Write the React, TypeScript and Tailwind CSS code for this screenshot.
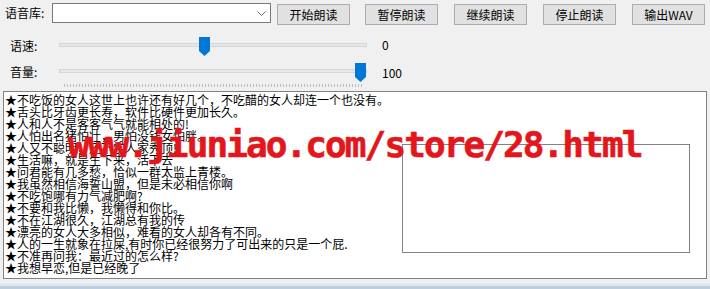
import React from "react";

const lines = [
  "★不吃饭的女人这世上也许还有好几个，不吃醋的女人却连一个也没有。",
  "★舌头比牙齿更长寿，软件比硬件更加长久。",
  "★人和人不是客客气气就能相处的!",
  "★人怕出名猪怕壮，男怕没钱女怕胖。",
  "★人又不聪明，还不学人家秀顶!",
  "★生活嘛，就是生下来，活下去",
  "★问君能有几多愁，恰似一群太监上青楼。",
  "★我虽然相信海誓山盟，但是未必相信你啊",
  "★不吃饱哪有力气减肥啊?",
  "★不要和我比懒，我懒得和你比。",
  "★不在江湖很久，江湖总有我的传",
  "★漂亮的女人大多相似，难看的女人却各有不同。",
  "★人的一生就象在拉屎,有时你已经很努力了可出来的只是一个屁.",
  "★不准再问我：最近过的怎么样?",
  "★我想早恋,但是已经晚了",
];

const buttons = [
  { label: "开始朗读", gap: "ml-[6px]" },
  { label: "暂停朗读", gap: "ml-[15px]" },
  { label: "继续朗读", gap: "ml-[16px]" },
  { label: "停止朗读", gap: "ml-[16px]" },
  { label: "输出WAV", gap: "ml-[16px]" },
];

function Slider({ thumbLeft, ticks }: { thumbLeft: number; ticks?: boolean }) {
  return (
    <div className="relative w-[308px] h-full">
      <div className="absolute left-0 right-0 top-[8px] h-[4px] bg-[#e7e7e7] border border-[#d6d6d6]" />
      <svg
        className="absolute top-[2px]"
        style={{ left: thumbLeft }}
        width="11"
        height="19"
        viewBox="0 0 11 19"
      >
        <path d="M0 0H11V14L5.5 19L0 14Z" fill="#0078d7" />
      </svg>
      {ticks && (
        <div className="absolute left-[5px] w-[298px] top-[23px] h-[3px] bg-[image:repeating-linear-gradient(to_right,#bdbdbd_0px,#bdbdbd_1px,transparent_1px,transparent_3px)]" />
      )}
    </div>
  );
}

export default function App() {
  return (
    <div className="relative w-[710px] h-[289px] overflow-hidden bg-[#f0f0f0] text-[12px] text-black font-['Noto_Sans_CJK_SC',sans-serif]">
      {/* 顶部工具行 */}
      <div className="flex items-start pt-[3px] pl-[5px] h-[25px]">
        <div className="w-[47px] h-[20px] leading-[20px]">语音库:</div>
        <div className="relative w-[219px] h-[20px] bg-white border border-[#7a7a7a]">
          <svg className="absolute right-[4px] top-[7px]" width="9" height="5" viewBox="0 0 9 5">
            <path d="M0.5 0.5L4.5 4.5L8.5 0.5" fill="none" stroke="#707070" strokeWidth="1" />
          </svg>
        </div>
        {buttons.map((b) => (
          <div
            key={b.label}
            className={`${b.gap} mt-[1px] w-[73px] h-[21px] flex items-center justify-center bg-[#e1e1e1] border border-[#adadad]`}
          >
            {b.label}
          </div>
        ))}
      </div>

      {/* 语速 */}
      <div className="flex mt-[10px] h-[26px]">
        <div className="w-[59px] pl-[10px] pt-[5px] leading-[12px]">语速:</div>
        <Slider thumbLeft={140} />
        <div className="ml-[15px] pt-[4px] leading-[12px]">0</div>
      </div>

      {/* 音量 */}
      <div className="flex h-[30px]">
        <div className="w-[59px] pl-[10px] pt-[5px] leading-[12px]">音量:</div>
        <Slider thumbLeft={296} ticks />
        <div className="ml-[15px] pt-[6px] leading-[12px]">100</div>
      </div>

      {/* 文本区 */}
      <div className="relative mx-[3px] h-[188px] bg-white border border-[#828282] pl-[1px] pt-[2px] leading-[12px] whitespace-nowrap overflow-hidden">
        {lines.map((l, i) => (
          <div key={i} className="h-[12px]">
            {l}
          </div>
        ))}
        <div className="absolute left-[398px] top-[52px] w-[288px] h-[109px] border border-[#828282] bg-white" />
      </div>

      <div className="h-[4px]" />
      <div className="h-[3px] bg-[#dfe7f1]" />
      <div className="h-[3px] bg-[#bfcede]" />

      {/* 水印 */}
      <div className="absolute left-[68px] top-[127px] text-[36px] leading-[36px] tracking-[-1.9px] font-bold text-[#e3161b] font-['DejaVu_Sans_Mono',monospace] whitespace-nowrap [-webkit-text-stroke:0.6px_#e3161b]">
        www.jiuniao.com/store/28.html
      </div>
    </div>
  );
}
